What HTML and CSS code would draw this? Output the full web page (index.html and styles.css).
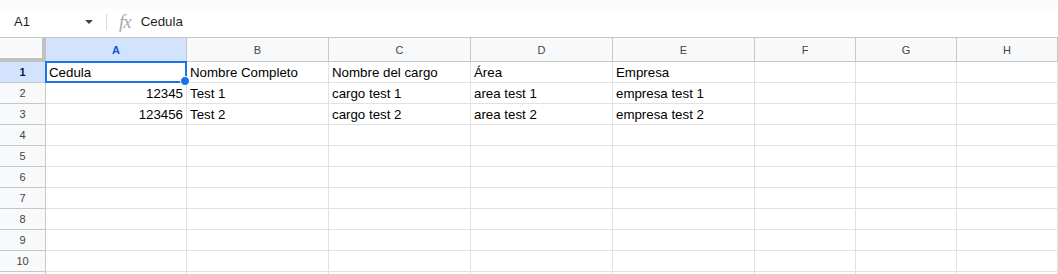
FILE: index.html
```html
<!DOCTYPE html>
<html lang="es">
<head>
    <meta charset="UTF-8">
    <meta name="viewport" content="width=device-width, initial-scale=1.0">
    <title>Hoja de cálculo</title>
    <link rel="stylesheet" href="styles.css">
</head>
<body>
    <div class="top-strip"></div>

    <div class="formula-bar">
        <div class="name-box">
            <span class="cell-ref">A1</span>
            <span class="caret"></span>
        </div>
        <div class="divider"></div>
        <span class="fx">fx</span>
        <span class="formula">Cedula</span>
    </div>

    <div class="sheet">
        <div class="corner"></div>
        <div class="col-head active">A</div>
        <div class="col-head">B</div>
        <div class="col-head">C</div>
        <div class="col-head">D</div>
        <div class="col-head">E</div>
        <div class="col-head">F</div>
        <div class="col-head">G</div>
        <div class="col-head">H</div>

        <div class="row-head active">1</div>
        <div class="cell selected">Cedula<span class="handle"></span></div>
        <div class="cell">Nombre Completo</div>
        <div class="cell">Nombre del cargo</div>
        <div class="cell">Área</div>
        <div class="cell">Empresa</div>
        <div class="cell"></div>
        <div class="cell"></div>
        <div class="cell"></div>

        <div class="row-head">2</div>
        <div class="cell num">12345</div>
        <div class="cell">Test 1</div>
        <div class="cell">cargo test 1</div>
        <div class="cell">area test 1</div>
        <div class="cell">empresa test 1</div>
        <div class="cell"></div>
        <div class="cell"></div>
        <div class="cell"></div>

        <div class="row-head">3</div>
        <div class="cell num">123456</div>
        <div class="cell">Test 2</div>
        <div class="cell">cargo test 2</div>
        <div class="cell">area test 2</div>
        <div class="cell">empresa test 2</div>
        <div class="cell"></div>
        <div class="cell"></div>
        <div class="cell"></div>

        <div class="row-head">4</div>
        <div class="cell"></div><div class="cell"></div><div class="cell"></div><div class="cell"></div>
        <div class="cell"></div><div class="cell"></div><div class="cell"></div><div class="cell"></div>

        <div class="row-head">5</div>
        <div class="cell"></div><div class="cell"></div><div class="cell"></div><div class="cell"></div>
        <div class="cell"></div><div class="cell"></div><div class="cell"></div><div class="cell"></div>

        <div class="row-head">6</div>
        <div class="cell"></div><div class="cell"></div><div class="cell"></div><div class="cell"></div>
        <div class="cell"></div><div class="cell"></div><div class="cell"></div><div class="cell"></div>

        <div class="row-head">7</div>
        <div class="cell"></div><div class="cell"></div><div class="cell"></div><div class="cell"></div>
        <div class="cell"></div><div class="cell"></div><div class="cell"></div><div class="cell"></div>

        <div class="row-head">8</div>
        <div class="cell"></div><div class="cell"></div><div class="cell"></div><div class="cell"></div>
        <div class="cell"></div><div class="cell"></div><div class="cell"></div><div class="cell"></div>

        <div class="row-head">9</div>
        <div class="cell"></div><div class="cell"></div><div class="cell"></div><div class="cell"></div>
        <div class="cell"></div><div class="cell"></div><div class="cell"></div><div class="cell"></div>

        <div class="row-head">10</div>
        <div class="cell"></div><div class="cell"></div><div class="cell"></div><div class="cell"></div>
        <div class="cell"></div><div class="cell"></div><div class="cell"></div><div class="cell"></div>

        <div class="row-head"></div>
        <div class="cell"></div><div class="cell"></div><div class="cell"></div><div class="cell"></div>
        <div class="cell"></div><div class="cell"></div><div class="cell"></div><div class="cell"></div>
    </div>
</body>
</html>
```

FILE: styles.css
```css
body {
    margin: 0;
    height: 274px;
    overflow: hidden;
    background: #fff;
    font-family: "Liberation Sans", Arial, sans-serif;
    color: #000;
}

.top-strip {
    height: 9px;
    background: #f9fbfd;
}

.formula-bar {
    display: flex;
    align-items: center;
    height: 29px;
    padding-bottom: 3px;
    border-bottom: 1px solid #c7c7c7;
    box-sizing: border-box;
}

.name-box {
    display: flex;
    align-items: center;
    width: 98px;
    padding-left: 14px;
    box-sizing: border-box;
}

.cell-ref {
    font-size: 13px;
    color: #1f1f1f;
    flex: 1;
}

.caret {
    width: 0;
    height: 0;
    border-left: 4px solid transparent;
    border-right: 4px solid transparent;
    border-top: 4px solid #444;
    margin-right: 5px;
}

.divider {
    width: 1px;
    height: 16px;
    background: #dadce0;
    margin: 0 10px 0 8px;
}

.fx {
    font-family: "Liberation Serif", serif;
    font-style: italic;
    font-size: 19px;
    color: #a8a8a8;
    letter-spacing: -1px;
    margin: 0 10px 0 2px;
}

.formula {
    font-size: 13.3px;
    color: #1f1f1f;
}

.sheet {
    display: grid;
    grid-template-columns: 46px 141px 142px 142px 142px 142px 101px 101px 101px;
    grid-template-rows: 24px repeat(11, 21px);
}

.corner {
    background: #f8f9fa;
    border-right: 4px solid #c0c0c0;
    border-bottom: 4px solid #c0c0c0;
    box-sizing: border-box;
}

.col-head,
.row-head {
    display: flex;
    align-items: center;
    justify-content: center;
    font-size: 11px;
    color: #444;
    background: #f8f9fa;
    border-right: 1px solid #c4c7c5;
    border-bottom: 1px solid #c4c7c5;
    box-sizing: border-box;
}

.col-head.active,
.row-head.active {
    background: #d3e3fd;
    color: #0b57d0;
    font-weight: bold;
}

.row-head.active {
    color: #041e49;
}

.cell {
    position: relative;
    display: flex;
    align-items: center;
    padding: 0 3px;
    font-size: 13.3px;
    color: #000;
    border-right: 1px solid #e1e1e1;
    border-bottom: 1px solid #e1e1e1;
    box-sizing: border-box;
    white-space: nowrap;
}

.cell.num {
    justify-content: flex-end;
}

.cell.selected {
    border: 2px solid #1a73e8;
    margin: -1px 0 0 -1px;
    padding-left: 2px;
}

.handle {
    position: absolute;
    right: -5px;
    bottom: -5px;
    width: 8px;
    height: 8px;
    border-radius: 50%;
    background: #1a73e8;
    border: 1px solid #fff;
    z-index: 2;
}
```
